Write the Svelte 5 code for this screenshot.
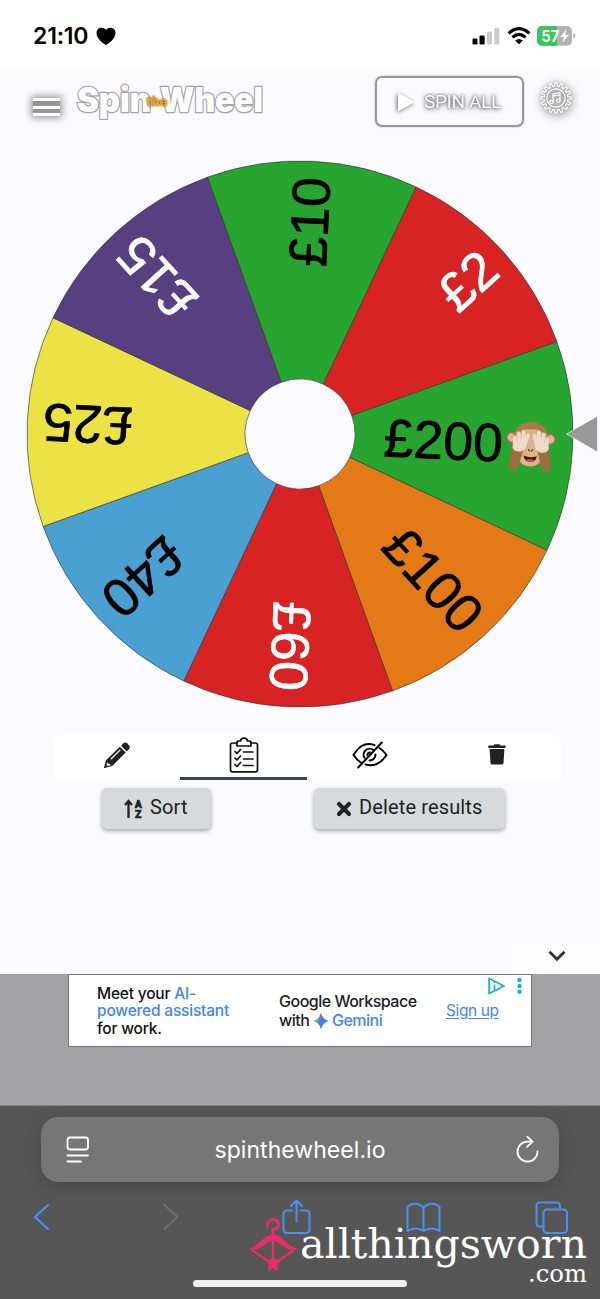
<script lang="ts">
  interface Segment {
    label: string;
    fill: string;
    dark?: boolean;
    monkey?: boolean;
  }

  const segments: Segment[] = [
    { label: '£200', fill: '#28a430', monkey: true },
    { label: '£100', fill: '#e47917' },
    { label: '£60', fill: '#d72324', dark: true },
    { label: '£40', fill: '#4ba0d2' },
    { label: '£25', fill: '#ebe346' },
    { label: '£15', fill: '#573f80', dark: true },
    { label: '£10', fill: '#28a430' },
    { label: '£2', fill: '#d72324', dark: true },
  ];

  const OUTER = 273;
  const INNER = 55;
  const STEP = 360 / segments.length;
  const rotation = 2.7;

  function point(radius: number, deg: number): string {
    const a = (deg * Math.PI) / 180;
    return `${(radius * Math.cos(a)).toFixed(2)} ${(radius * Math.sin(a)).toFixed(2)}`;
  }

  function slice(i: number): string {
    const from = rotation + i * STEP - STEP / 2;
    const to = from + STEP;
    return `M${point(INNER, from)} L${point(OUTER, from)} A${OUTER} ${OUTER} 0 0 1 ${point(OUTER, to)} L${point(INNER, to)} A${INNER} ${INNER} 0 0 0 ${point(INNER, from)} Z`;
  }

  // Cog outline with 16 square teeth
  function cog(): string {
    let d = '';
    for (let i = 0; i < 16; i++) {
      const a = i * 22.5;
      d += `${i ? 'L' : 'M'}${point(11.8, a - 7)} L${point(15.2, a - 4)} L${point(15.2, a + 4)} L${point(11.8, a + 7)} `;
    }
    return d + 'Z';
  }

  let activeTab = $state('results');
</script>

<div class="screen">
  <div class="status">
    <div class="time">
      <span>21:10</span>
      <svg width="20" height="19" viewBox="0 0 20 19"><path d="M10 18.3C7 15.9.5 11.6.5 6.2.5 2.9 2.6.8 5.3.8 7.4.8 9 1.5 10 2.8 11 1.5 12.6.8 14.7.8 17.4.8 19.5 2.9 19.5 6.2 19.5 11.6 13 15.9 10 18.3Z" /></svg>
    </div>
    <div class="indicators">
      <svg width="28" height="18" viewBox="0 0 28 18">
        <rect x="0.5" y="11.5" width="5" height="6" rx="1.3" />
        <rect x="7.5" y="8.5" width="5.2" height="9" rx="1.3" />
        <rect x="15" y="4.5" width="5" height="13" rx="1.3" fill="#cbcbcb" />
        <rect x="22.3" y="1" width="5" height="16.5" rx="1.3" fill="#cbcbcb" />
      </svg>
      <svg class="wifi" width="24" height="18" viewBox="0 0 24 18" fill="none" stroke="#000">
        <path d="M1.6 6.4Q12-3.2 22.4 6.4" stroke-width="3.1" />
        <path d="M5.4 10.3Q12 4.4 18.6 10.3" stroke-width="3" />
        <path d="M12 17.3 8.2 13.6Q12 10.4 15.8 13.6Z" fill="#000" stroke="none" />
      </svg>
      <svg class="battery" width="39" height="20" viewBox="0 0 39 20">
        <rect x="0" y="0" width="35" height="19.7" rx="5" fill="#b3b3b3" />
        <path d="M5 0H20V19.7H5A5 5 0 0 1 0 14.7V5A5 5 0 0 1 5 0Z" fill="#35c759" />
        <path d="M36.3 7Q38.4 8 38.4 9.9T36.3 12.8Z" fill="#b3b3b3" />
        <text x="4.3" y="15.6" textLength="18" lengthAdjust="spacingAndGlyphs">57</text>
        <path d="M29.5 3.5 23 10.9H26.8L25.6 16.4 32.2 8.8H28.3Z" fill="#fff" />
      </svg>
    </div>
  </div>

  <header>
    <button class="menu" aria-label="Menu"><i></i><i></i><i></i></button>
    <svg class="logo" width="192" height="46" viewBox="0 0 192 46">
      <text class="word" x="3" y="31.5" textLength="74" lengthAdjust="spacingAndGlyphs">Spin</text>
      <text class="word" x="86" y="31.5" textLength="103" lengthAdjust="spacingAndGlyphs">Wheel</text>
      <text class="the" x="72.5" y="25.5" textLength="21" lengthAdjust="spacingAndGlyphs">the</text>
    </svg>
    <button class="spin">
      <svg width="18" height="20" viewBox="0 0 18 20"><path d="M2 2V18L16 10Z" fill="#fff" stroke="#fff" stroke-width="2" stroke-linejoin="round" /></svg>
      <span>SPIN ALL</span>
    </button>
    <svg class="settings" width="34" height="34" viewBox="-17 -17 34 34" fill="none" stroke="#fff" stroke-width="1.2">
      <path d={cog()} />
      <circle r="9.2" />
      <path d="M-3 4V-4L4-5.5V2.5M-3-1.8 4-3.3" />
      <ellipse cx="-4.6" cy="3.9" rx="1.8" ry="1.5" />
      <ellipse cx="2.4" cy="2.6" rx="1.8" ry="1.5" />
    </svg>
  </header>

  <svg class="wheel" width="600" height="566" viewBox="-300 -284 600 566">
    {#each segments as seg, i}
      <path class="slice" d={slice(i)} fill={seg.fill} />
    {/each}
    {#each segments as seg, i}
      <g transform="rotate({rotation + i * STEP})">
        <text class="label" class:dark={seg.dark} x={seg.monkey ? 203 : 257} y="18.2">{seg.label}</text>
        {#if seg.monkey}
          <g transform="translate(231 1.5)">
            <circle cx="-18.5" cy="-8" r="6" fill="#9b7043" />
            <circle cx="18.5" cy="-8" r="6" fill="#9b7043" />
            <circle cx="-19.3" cy="-8" r="4.3" fill="#f3a9a8" />
            <circle cx="19.3" cy="-8" r="4.3" fill="#f3a9a8" />
            <path d="M0-24.5C11-24.5 18-17 18-5 18 9 13 20 0 20S-18 9-18-5C-18-17-11-24.5 0-24.5Z" fill="#a87c49" />
            <path d="M0-17C8-18 15-13 14-4 13 4 14 20 0 20S-13 4-14-4C-15-13-8-18 0-17Z" fill="#dab585" />
            <path d="M-6.5 9.500Q0 12 6.5 9.500 6 15.500 0 15.500T-6.5 9.500Z" fill="#4c1712" />
            <path d="M-4 13.800Q0 11.800 4 13.800 2 15.500 0 15.500T-4 13.800Z" fill="#e8505b" />
            <path d="M-2 3.5-1 4.5M2 3.5 1 4.5" stroke="#6c4527" stroke-width="1.4" stroke-linecap="round" />
            <path d="M-18.500 0-21.500 24H-12.500L-7 4Z" fill="#9a6e40" />
            <path d="M18.500 0 21.500 24H12.500L7 4Z" fill="#9a6e40" />
            <g stroke="#c9a48a" stroke-width="5.200" stroke-linecap="round">
              <path d="M-15 1-16.500-8M-11 0-12.500-12M-8 0-7.500-14M-7 2-3-11M15 1 16.500-8M11 0 12.500-12M8 0 7.500-14M7 2 3-11" />
            </g>
            <g stroke="#f1d9c8" stroke-width="4" stroke-linecap="round">
              <path d="M-15 1-16.500-8M-11 0-12.500-12M-8 0-7.500-14M-7 2-3-11M15 1 16.500-8M11 0 12.500-12M8 0 7.500-14M7 2 3-11" />
            </g>
            <ellipse cx="-12" cy="1" rx="6.200" ry="4.800" fill="#f1d9c8" />
            <ellipse cx="12" cy="1" rx="6.200" ry="4.800" fill="#f1d9c8" />
          </g>
        {/if}
      </g>
    {/each}
    <path d="M266.5 0 297.5-18V18Z" fill="#999" stroke="#fbfaff" stroke-width="0.6" />
  </svg>

  <main>
    <nav>
      <button class:active={activeTab === 'edit'} onclick={() => (activeTab = 'edit')} aria-label="Edit">
        <svg width="28" height="28" viewBox="0 0 28 28">
          <path d="M20.5 2.3Q22.2.7 24 2.3L26.2 4.500Q27.800 6.200 26.200 8L23.800 10.400 18 4.700Z" fill="#222" />
          <path d="M16.9 5.8 22.7 11.6 9.2 25 .8 27.2 3 19.3Z" fill="#222" />
          <path d="M7.8 18.2 17.2 8.9" stroke="#fff" stroke-width="1.3" />
          <path d="M4.500 21 5.300 22.700 7.300 23 7.500 24.300 4.500 25 3.400 24Z" fill="#fff" />
        </svg>
      </button>
      <button class:active={activeTab === 'results'} onclick={() => (activeTab = 'results')} aria-label="Results">
        <svg width="30" height="36" viewBox="0 0 30 36" fill="none" stroke="#111" stroke-width="1.7" stroke-linejoin="round" stroke-linecap="round">
          <path d="M8 6H3.5Q1.5 6 1.5 8V32.5Q1.5 34.8 3.5 34.8H26.5Q28.5 34.8 28.5 32.5V8Q28.5 6 26.5 6H22" />
          <path d="M8 9V5.5Q8 4 10 4H11.5Q12 1.2 15 1.2T18.5 4H20Q22 4 22 5.5V9Z" />
          <path d="M6 14.5 8 16.5 11.5 12.5M6 21 8 23 11.5 19M6 27.5 8 29.5 11.5 25.5M14.5 15H24M14.5 22H24M14.5 28.5H24" />
        </svg>
      </button>
      <button class:active={activeTab === 'hidden'} onclick={() => (activeTab = 'hidden')} aria-label="Hide">
        <svg width="36" height="28" viewBox="0 0 36 28" fill="none" stroke="#000" stroke-width="2" stroke-linecap="round">
          <path d="M22.5 4.2C12-.2 5.8 7.5 1.5 14 3.8 17.4 6.2 20 9 21.7M27.5 7C30.3 8.8 32.500 11.300 34.500 14 29.500 21.600 22.500 26 13.500 23.500" />
          <path d="M21.5 9.1A6 6 0 0 0 12.5 16.8M23.5 13.5A5.8 5.8 0 0 1 17.5 19.5M18 11.5A2.8 2.8 0 0 0 15.3 14" />
          <path d="M6.2 26.5 29.8 1.5" />
        </svg>
      </button>
      <button class:active={activeTab === 'trash'} onclick={() => (activeTab = 'trash')} aria-label="Delete">
        <svg class="trash" width="18" height="21" viewBox="0 0 18 21" fill="#222">
          <path d="M.4 1.4H5.5L6.5.3H11.5L12.5 1.4H17.6V3.9H.4ZM1.6 5H16.4L15.5 19Q15.4 20.6 13.8 20.6H4.2Q2.6 20.6 2.5 19Z" />
        </svg>
      </button>
    </nav>
    <div class="actions">
      <button class="sort">
        <svg width="20" height="20" viewBox="0 0 20 20">
          <path d="M4.5 19V3.5M1 6 4.5 2 8 6" fill="none" stroke="#222" stroke-width="2.3" />
          <text x="10.800" y="8.600">A</text>
          <text x="11" y="19">Z</text>
        </svg>
        Sort
      </button>
      <button class="clear">
        <svg width="16" height="16" viewBox="0 0 16 16"><path d="M3 3 13 13M13 3 3 13" stroke="#222" stroke-width="4.2" stroke-linecap="round" /></svg>
        Delete results
      </button>
    </div>
    <button class="collapse" aria-label="Collapse">
      <svg width="18" height="12" viewBox="0 0 18 12"><path d="M1.5 1.8 9 9.3 16.5 1.8" fill="none" stroke="#303033" stroke-width="2.8" /></svg>
    </button>
  </main>

  <section class="ad-strip">
    <div class="ad">
      <p class="pitch">Meet your <em>AI-<br />powered assistant</em><br />for work.</p>
      <p class="product">
        Google Workspace<br />with
        <svg width="16" height="16" viewBox="0 0 16 16">
          <defs>
            <linearGradient id="spark" x1="0" y1="0.2" x2="1" y2="0.5">
              <stop offset="0" stop-color="#fbbc04" />
              <stop offset="0.35" stop-color="#55a887" />
              <stop offset="0.5" stop-color="#3b82f5" />
            </linearGradient>
            <linearGradient id="flare" x1="0" y1="0" x2="0" y2="1">
              <stop offset="0" stop-color="#f04a3e" />
              <stop offset="0.4" stop-color="#f04a3e" stop-opacity="0" />
              <stop offset="0.7" stop-color="#34a853" stop-opacity="0" />
              <stop offset="1" stop-color="#34a853" />
            </linearGradient>
          </defs>
          <path d="M8 0Q9.600 6.400 16 8 9.600 9.600 8 16 6.400 9.600 0 8 6.400 6.400 8 0Z" fill="url(#spark)" />
          <path d="M8 0Q9.600 6.400 16 8 9.600 9.600 8 16 6.400 9.600 0 8 6.400 6.400 8 0Z" fill="url(#flare)" />
        </svg>
        <em>Gemini</em>
      </p>
      <span class="signup">Sign up</span>
      <svg class="choices" width="36" height="18" viewBox="0 0 36 18">
        <path d="M1.2 1.5V16.5L16 9Z" fill="none" stroke="#17b1cf" stroke-width="1.9" stroke-linejoin="round" />
        <path d="M6.5 7.5V13M6.5 4.5V6" stroke="#17b1cf" stroke-width="1.7" />
        <g fill="#17b1cf"><circle cx="31.5" cy="3" r="2.2" /><circle cx="31.5" cy="9" r="2.2" /><circle cx="31.5" cy="14.7" r="2.2" /></g>
      </svg>
    </div>
  </section>

  <footer>
    <div class="address">
      <svg width="24" height="28" viewBox="0 0 24 28" fill="none" stroke="#fff" stroke-width="1.8" stroke-linecap="round">
        <rect x="2.5" y="1.5" width="20.5" height="12" rx="2.5" />
        <path d="M2.5 19.500H23M2.500 25.500H16" />
      </svg>
      <span>spinthewheel.io</span>
      <svg width="24" height="28" viewBox="0 0 24 28" fill="none" stroke="#fff" stroke-width="1.8" stroke-linecap="round" stroke-linejoin="round">
        <path d="M16 5.600H12.500A10 10 0 1 0 22.500 15.500M12.500.8 17.700 5.600 12 10.800" />
      </svg>
    </div>
    <div class="toolbar">
      <svg width="32" height="36" viewBox="0 0 32 36"><path d="M21 6 8 18 21 30" /></svg>
      <svg class="off" width="32" height="36" viewBox="0 0 32 36"><path d="M11.5 6 24.5 18 11.5 30" /></svg>
      <svg width="32" height="36" viewBox="0 0 32 36"><path d="M13 11.5H8Q4.500 11.500 4.500 15V30.500Q4.500 34 8 34H27Q30.500 34 30.500 30.500V15Q30.500 11.500 27 11.500H22M17.500 22.500V1.800M12 7 17.500 1.500 23 7" /></svg>
      <svg width="36" height="36" viewBox="0 0 36 36"><path d="M18.500 8.500Q10.500 1.500 2.500 7.500V32Q10.500 27 18.500 32 26.500 27 34.500 32V7.500Q26.500 1.500 18.500 8.500V31" /></svg>
      <svg width="34" height="36" viewBox="0 0 34 36"><path d="M8.500 27.5H5Q1.500 27.500 1.500 24V7Q1.500 3.500 5 3.500H21.500Q25 3.500 25 7V10" /><rect x="8.5" y="10.500" width="23.500" height="23.500" rx="3.5" /></svg>
    </div>
    <div class="home"></div>
  </footer>

  <div class="watermark">
    <svg width="345" height="78" viewBox="0 0 345 78">
      <g fill="none" stroke="#ef2a68">
        <path d="M20.500 12.500Q19.500 5 26 4.500 32 5 31.500 10.500 30.500 14.500 26 14.500V22" stroke-width="2.8" />
        <path d="M26 25V52M5 35 23 47.500M47 35 29 47.500" stroke-width="2.4" />
      </g>
      <path d="M0 34.300C13 31 16 20 26 19.500 36 20 39 31 52 34.300 36 37 33 25.500 26 25.500S16 37 0 34.300Z" fill="#ef2a68" />
      <path d="M21.500 45 26 43 30.500 45V56.500L26 53 21.500 56.500Z" fill="#ef2a68" />
      <text class="brand" x="53" y="43" textLength="287" lengthAdjust="spacingAndGlyphs">allthingsworn</text>
      <text class="tld" x="281" y="66.500" textLength="59" lengthAdjust="spacingAndGlyphs">.com</text>
    </svg>
  </div>
</div>

<style>
  :global(body) {
    margin: 0;
    background: #fbfaff;
  }

  .screen {
    position: relative;
    display: flex;
    flex-direction: column;
    width: 600px;
    height: 1299px;
    overflow: hidden;
    background: #fbfaff;
    font-family: Roboto, sans-serif;
  }

  svg {
    display: block;
    flex: none;
  }

  button {
    border: none;
    background: none;
    padding: 0;
    font: inherit;
    color: inherit;
  }

  .status {
    display: flex;
    justify-content: space-between;
    align-items: center;
    height: 70px;
    box-sizing: border-box;
    padding: 2px 24px 0 33px;
    background: #fff;
  }

  .time {
    display: flex;
    align-items: center;
    gap: 8px;
    font: 600 23px Inter, sans-serif;
    letter-spacing: -0.2px;
  }

  .indicators {
    display: flex;
    align-items: center;
  }

  .wifi {
    margin: 0 6px 0 7px;
  }

  .battery text {
    font: 700 16px Inter, sans-serif;
    fill: #fff;
  }

  header {
    display: flex;
    align-items: flex-start;
    height: 80px;
    padding-left: 33px;
    box-sizing: border-box;
  }

  .menu {
    display: flex;
    flex-direction: column;
    justify-content: space-between;
    width: 27px;
    height: 18px;
    margin: 28px 14px 0 0;
    background: #969696;
    box-shadow: 0 0 7px 2px #999;
  }

  .menu i {
    height: 3px;
    background: #fff;
  }

  .logo {
    margin-top: 10px;
  }

  .word {
    font: 900 34.5px Inter, sans-serif;
    fill: #fff;
    stroke: #a4a4a8;
    stroke-width: 2.6px;
    paint-order: stroke;
    stroke-linejoin: round;
  }

  .the {
    font: 700 12.500px 'DejaVu Sans', sans-serif;
    fill: #ffa500;
    filter: drop-shadow(0 0 1px #222);
  }

  .spin {
    display: flex;
    align-items: center;
    gap: 9px;
    width: 149px;
    height: 51px;
    margin: 6px 0 0 109px;
    box-sizing: border-box;
    padding-left: 20px;
    border: 2px solid #979799;
    border-radius: 7px;
    box-shadow: 0 0 2px #aaa;
    color: #fff;
    font-size: 19px;
    letter-spacing: -0.35px;
    text-shadow: 0 0 2px #555, 0 1px 5px #444;
  }

  .spin svg {
    overflow: visible;
    filter: drop-shadow(-1px 1px 2px #666);
  }

  .settings {
    margin: 11px 0 0 15px;
    overflow: visible;
    filter: drop-shadow(0 0 1px #999) drop-shadow(1px 2px 4px #888);
  }

  .slice {
    stroke: #333;
    stroke-opacity: 0.7;
    stroke-width: 0.9;
  }

  .label {
    font: 53.5px 'Liberation Sans', Arial, sans-serif;
    text-anchor: end;
    fill: #000;
    stroke: #000;
    stroke-width: 0.7px;
  }

  .label.dark {
    fill: #fff;
    stroke: #fff;
  }

  main {
    display: flex;
    flex-direction: column;
    height: 258px;
    padding-top: 18px;
    box-sizing: border-box;
  }

  nav {
    display: grid;
    grid-template-columns: repeat(4, 1fr);
    width: 507px;
    height: 46px;
    margin-left: 53.5px;
    border-radius: 12px 12px 0 0;
    background: #fff;
  }

  nav button {
    display: flex;
    align-items: center;
    justify-content: center;
    box-sizing: border-box;
    padding-bottom: 1px;
    border-bottom: 3px solid transparent;
  }

  nav .active {
    border-color: #37474f;
  }

  .trash {
    margin-bottom: 2px;
  }

  .actions {
    display: flex;
    padding: 8px 0 0 102px;
    gap: 103px;
  }

  .actions button {
    display: flex;
    align-items: center;
    height: 41px;
    box-sizing: border-box;
    padding: 0 0 4px 22px;
    border-radius: 5px;
    background: #d6dadd;
    box-shadow: 0 2px 4px rgba(0, 0, 0, 0.35);
    color: #222;
    font-size: 20px;
    letter-spacing: 0.13px;
  }

  .actions .sort {
    gap: 6px;
    width: 109px;
  }

  .actions .clear {
    gap: 7px;
    width: 191px;
  }

  .sort svg,
  .clear svg {
    margin-top: 4px;
    overflow: visible;
  }

  .sort text {
    font: 900 10.5px Roboto, sans-serif;
    letter-spacing: 0;
    fill: #222;
    stroke: #222;
    stroke-width: 0.5px;
  }

  .collapse {
    display: flex;
    align-items: center;
    justify-content: center;
    width: 87px;
    height: 36px;
    margin: auto 0 0 auto;
    border-radius: 8px 0 0;
    background: #fdfdff;
  }

  .ad-strip {
    height: 131px;
    background: #a3a3a5;
  }

  .ad {
    position: relative;
    display: flex;
    align-items: center;
    width: 464px;
    height: 73px;
    margin-left: 68px;
    box-sizing: border-box;
    border: 1.5px solid #77777a;
    background: #fff;
    font-family: Inter, sans-serif;
    font-weight: 500;
    color: #202124;
  }

  .ad p {
    margin: 0;
    white-space: nowrap;
  }

  .ad em {
    font-style: normal;
    color: #4285f4;
  }

  .ad .pitch {
    width: 182px;
    padding: 1px 0 0 28px;
    box-sizing: border-box;
    font-size: 15.5px;
    line-height: 17.5px;
    letter-spacing: -0.2px;
    color: #111;
  }

  .ad .product {
    width: 167px;
    padding-left: 28px;
    box-sizing: border-box;
    font-size: 16px;
    line-height: 18.5px;
    letter-spacing: -0.5px;
  }

  .product svg {
    display: inline-block;
    vertical-align: -3px;
    margin: 0 -1px 0 0;
  }

  .signup {
    margin-left: 28px;
    font-size: 15.5px;
    font-weight: 400;
    letter-spacing: -0.4px;
    color: #4285f4;
    text-decoration: underline;
    text-underline-offset: 2px;
    white-space: nowrap;
  }

  .choices {
    position: absolute;
    top: 2px;
    right: 7px;
  }

  footer {
    display: flex;
    flex-direction: column;
    align-items: center;
    height: 194px;
    background: #565656;
    border-top: 1px solid #88888a;
    box-sizing: border-box;
    padding-top: 11px;
  }

  .address {
    display: flex;
    align-items: center;
    justify-content: space-between;
    width: 518px;
    height: 65px;
    box-sizing: border-box;
    padding: 0 20px 0 24px;
    border-radius: 17px;
    background: #767676;
    box-shadow: 0 3px 18px rgba(0, 0, 0, 0.2);
    color: #fff;
    font: 23px Inter, sans-serif;
    letter-spacing: 0.05px;
  }

  .address span {
    margin-right: 4px;
  }

  .toolbar {
    display: flex;
    justify-content: space-between;
    width: 542px;
    margin: 17px 4px 0 0;
  }

  .toolbar svg {
    fill: none;
    stroke: #4791f8;
    stroke-width: 2;
    stroke-linecap: round;
    stroke-linejoin: round;
  }

  .toolbar .off {
    stroke: #707070;
  }

  .home {
    width: 214px;
    height: 7px;
    margin-top: 45px;
    border-radius: 4px;
    background: #f0f0f0;
  }

  .watermark {
    position: absolute;
    left: 247px;
    top: 1215px;
  }

  .watermark text {
    font-family: 'DejaVu Serif Condensed', 'DejaVu Serif', serif;
    font-stretch: condensed;
    fill: #fff;
  }

  .brand {
    font-size: 41px;
  }

  .tld {
    font-size: 25px;
  }
</style>
